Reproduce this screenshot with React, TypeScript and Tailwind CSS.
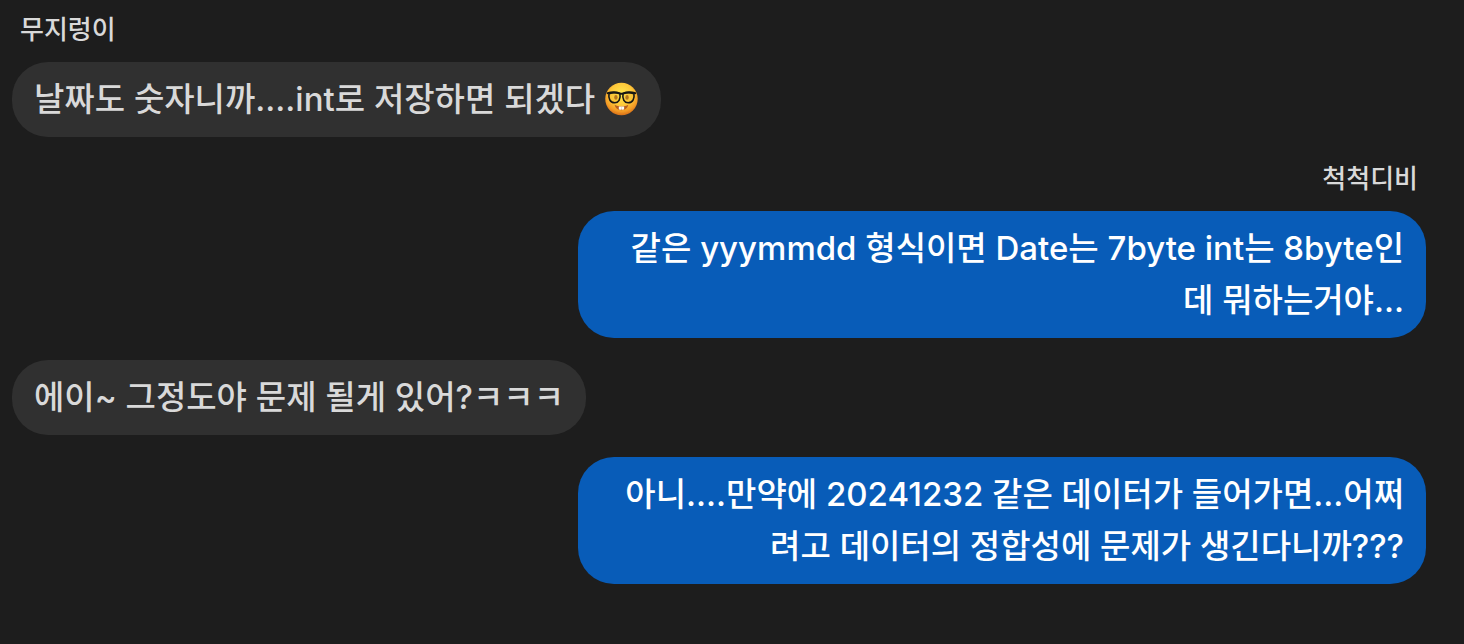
type Message = {
  sender?: string
  text: string
  mine: boolean
  emoji?: boolean
}

const messages: Message[] = [
  { sender: '무지렁이', text: '날짜도 숫자니까....int로 저장하면 되겠다', mine: false, emoji: true },
  { sender: '척척디비', text: '같은 yyymmdd 형식이면 Date는 7byte int는 8byte인데 뭐하는거야...', mine: true },
  { text: '에이~ 그정도야 문제 될게 있어?ㅋㅋㅋ', mine: false },
  {
    text: '아니....만약에 20241232 같은 데이터가 들어가면...어쩌려고 데이터의 정합성에 문제가 생긴다니까???',
    mine: true,
  },
]

function NerdFace() {
  return (
    <svg viewBox="0 0 64 64" className="ml-[10px] inline-block size-[34px] align-[-5px]" role="img" aria-label="nerd face">
      <defs>
        <radialGradient id="face" cx="50%" cy="36%" r="62%">
          <stop offset="0" stopColor="#ffe94f" />
          <stop offset="0.55" stopColor="#fdc83a" />
          <stop offset="0.85" stopColor="#f39a25" />
          <stop offset="1" stopColor="#dc761a" />
        </radialGradient>
      </defs>
      <circle cx="31" cy="32" r="30.5" fill="url(#face)" />
      <path d="M18 43c7 4 19 4 26 0-2 7-6 10-13 10s-11-3-13-10z" fill="#b85f1e" />
      <path d="M26 46h10v4.500q0 1.500-1.500 1.500h-2.500q-1 0-1-1 0 1-1 1h-2.500q-1.500 0-1.500-1.500z" fill="#fffdf5" />
      <path d="M31 46v5" stroke="#c9b9a4" strokeWidth="0.8" />
      <ellipse cx="20.500" cy="29" rx="3.200" ry="4.600" fill="#9a5a18" />
      <ellipse cx="41.500" cy="29" rx="3.200" ry="4.600" fill="#9a5a18" />
      <g fill="#f2b62c" fillOpacity="0.3" stroke="#171714" strokeWidth="3" strokeLinejoin="round">
        <path d="M7.500 22q11-4 20.500 0 1.500 7-1.500 12.500-2.500 4.500-8 4.500-7 0-9.500-5.500Q6.500 29 7.500 22z" />
        <path d="M54.500 22q-11-4-20.500 0-1.500 7 1.500 12.500 2.500 4.500 8 4.500 7 0 9.500-5.500Q55.500 29 54.500 22z" />
      </g>
      <path
        d="M5 21q12-4 23 .5 3 1.500 6 0 11-4.500 23-.5"
        fill="none"
        stroke="#171714"
        strokeWidth="3.800"
        strokeLinecap="round"
      />
    </svg>
  )
}

function ChatMessage({ sender, text, mine, emoji }: Message) {
  return (
    <li className={mine ? 'flex flex-col items-end' : 'flex flex-col items-start'}>
      {sender && <span className="px-2 pb-3 text-[26px] leading-[40px] text-[#d9d9d9]">{sender}</span>}
      <p
        className={
          mine
            ? 'max-w-3/5 rounded-[36px] bg-[#085cb8] pt-[11px] pr-[22px] pb-3 pl-7 text-right text-white'
            : 'max-w-3/5 rounded-[36px] bg-[#303030] px-[22px] pt-[11px] pb-3 text-[#d9d9d9]'
        }
      >
        {text}
        {emoji && <NerdFace />}
      </p>
    </li>
  )
}

export default function App() {
  return (
    <main
      lang="ko"
      className="min-h-screen bg-[#1d1d1d] pt-[10px] pr-[38px] pb-[10px] pl-3 font-['Inter','Noto_Sans_CJK_KR',sans-serif] text-[33px] leading-[52px] font-medium"
    >
      <ul className="flex flex-col gap-[22px]">
        {messages.map((message) => (
          <ChatMessage key={message.text} {...message} />
        ))}
      </ul>
    </main>
  )
}
